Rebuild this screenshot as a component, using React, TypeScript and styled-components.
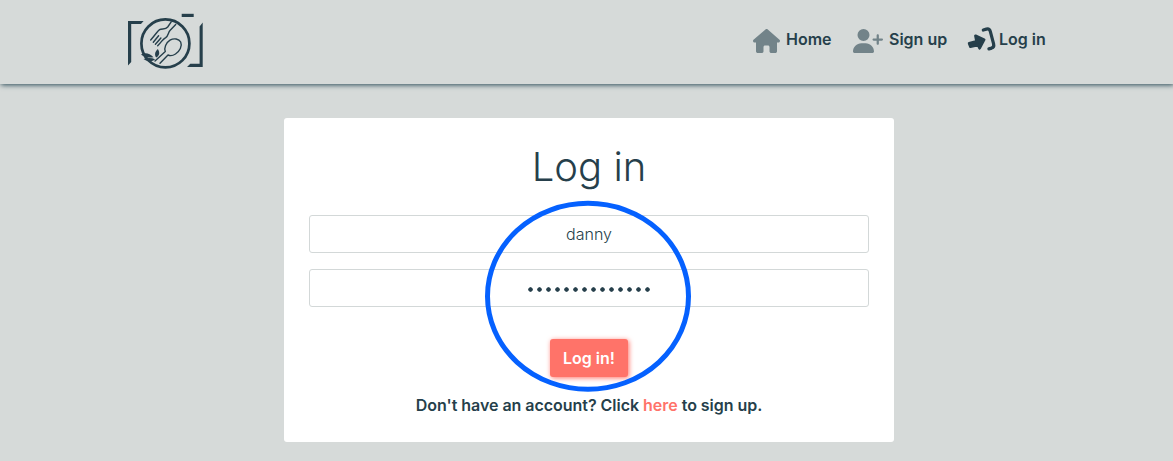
import React from 'react';
import styled, { createGlobalStyle } from 'styled-components';
import { FaHouse, FaUserPlus } from 'react-icons/fa6';

const ink = '#263f4b';
const coral = '#ff7369';

const GlobalStyle = createGlobalStyle`
  *, *::before, *::after { box-sizing: border-box; }
  body {
    margin: 0;
    background: #d6dad9;
    color: ${ink};
    font-family: Inter, "Liberation Sans", sans-serif;
    font-size: 16px;
    line-height: 24px;
    overflow: hidden;
  }
`;

const Header = styled.header`
  display: flex;
  justify-content: space-between;
  height: 84px;
  padding: 10px 127px 0 125px;
  background: #d6dad9;
  box-shadow: 1px 1px 5px #2b4b57;
`;

const Logo = styled.svg`
  display: block;
  width: 80px;
  height: 60px;
`;

const Nav = styled.nav`
  display: flex;
  height: 60px;
  padding-top: 17px;
`;

const NavLink = styled.a<{ $width: number; $icon: number; $active?: boolean }>`
  display: flex;
  width: ${(p) => p.$width}px;
  color: ${ink};
  font-weight: 600;
  white-space: nowrap;
  text-decoration: none;

  svg {
    flex: none;
    height: ${(p) => (p.$active ? 26 : 24)}px;
    width: ${(p) => p.$icon}px;
    margin: ${(p) => (p.$active ? '-1px 2px 0 -3px' : '2px 6px 0 0')};
    color: ${(p) => (p.$active ? ink : '#728389')};
  }
`;

const Card = styled.main`
  position: relative;
  width: 610px;
  height: 324px;
  margin: 34px 0 0 284px;
  padding: 24px 25px;
  border-radius: 3px;
  background: #fff;
  text-align: center;
`;

const Title = styled.h1`
  margin: 0 0 24px;
  font-size: 40px;
  font-weight: 300;
  line-height: 49px;
`;

const Form = styled.form`
  display: flex;
  flex-direction: column;
  align-items: center;
`;

const Field = styled.div`
  display: flex;
  align-items: center;
  justify-content: center;
  width: 100%;
  height: 38px;
  margin-bottom: 16px;
  border: 1px solid #d3d8d8;
  border-radius: 3px;
  font-weight: 300;
`;

const Mask = styled.span`
  display: flex;
  gap: 4px;
  padding: 3px 1px 0 0;
`;

const Dot = styled.i`
  width: 5px;
  height: 5px;
  border-radius: 50%;
  background: radial-gradient(circle, ${ink} 1.9px, transparent 2.8px);
`;

const Submit = styled.button`
  width: 78px;
  height: 38px;
  margin: 16px 0 0;
  padding: 0;
  border: 0;
  border-radius: 3px;
  background: ${coral};
  box-shadow: 1px 1px 5px ${coral};
  color: #fff;
  font: 600 16px/24px Inter, sans-serif;
`;

const Prompt = styled.p`
  margin: 16px 0 0;
  font-weight: 600;
  letter-spacing: -0.03px;
`;

const PromptLink = styled.a`
  color: ${coral};
`;

const Highlight = styled.svg`
  position: absolute;
  left: 200px;
  top: 82px;
  width: 208px;
  height: 193px;
  pointer-events: none;
`;

function CameraLogo() {
  return (
    <Logo viewBox="125 10 80 60" fill="none" stroke={ink}>
      <g fill={ink} stroke="none">
        <path d="M128 21H143.6L141 24H131.2V62L128 65.5Z" />
        <path d="M181.7 13.8H193.7V17H181.7Z" />
        <path d="M202.7 22.5V67H187L190.3 63.8H199.6V26.5Z" />
        <path d="M141 54.5C145 52.3 149.5 53 153.5 57.2C149 58 145 57.6 141 54.5Z" />
        <path d="M143.5 58.9C148 57.6 152 57.7 155 59.2C152 62.2 147.5 61.8 143.5 58.9Z" />
        <path d="M157.8 49C160 52.2 159.8 55.5 156.2 57.6C154 54.6 155.2 51.5 157.8 49Z" />
      </g>
      <circle cx="165.4" cy="43.4" r="24" strokeWidth="2.7" />
      <g strokeWidth="1.4" strokeLinecap="round" strokeLinejoin="round">
        <path d="M171.2 21.8L167.7 27C165.5 30 162 28.2 159.6 29.6C157.8 30.8 156.8 33 150.7 40" />
        <path d="M175.7 24.5L170.2 30.2C167.8 32.8 168.7 35.3 165.7 37.6C162.5 39.3 162 41.5 157.7 45.7" />
        <path d="M158.6 35.8L153.3 42.2M160.9 38L155.4 44.3" />
        <path d="M155 61L165.3 51.6C163.8 47.8 166 42.8 170 40.2C174 37.8 179 38.7 180.7 42C182.5 46 179.7 51.3 175.5 54C172.8 55.8 170 56 168 55L160 63.3" />
      </g>
    </Logo>
  );
}

function LoginIcon() {
  return (
    <svg viewBox="967 26 30 26" fill="none" stroke="currentColor" strokeLinecap="round" strokeLinejoin="round">
      <path d="M983.3 30L986.4 29.1Q989.4 28.4 990.3 31.4L993.6 43.8Q994.4 47.1 991.6 48.1L988.9 48.9" strokeWidth="3.2" />
      <path d="M969.2 43.4L976.6 41.4L975.5 35.8L984.1 39.7L979.6 48.2L978.1 45L970.5 46.6Z" fill="currentColor" strokeWidth="2.8" />
    </svg>
  );
}

export default function App() {
  return (
    <>
      <GlobalStyle />
      <Header>
        <CameraLogo />
        <Nav>
          <NavLink $width={100} $icon={27}><FaHouse />Home</NavLink>
          <NavLink $width={117} $icon={30}><FaUserPlus />Sign up</NavLink>
          <NavLink $width={76} $icon={30} $active><LoginIcon />Log in</NavLink>
        </Nav>
      </Header>
      <Card>
        <Title>Log in</Title>
        <Form>
          <Field>danny</Field>
          <Field>
            <Mask>
              {Array.from({ length: 14 }, (_, i) => <Dot key={i} />)}
            </Mask>
          </Field>
          <Submit type="button">Log in!</Submit>
        </Form>
        <Prompt>Don't have an account? Click <PromptLink>here</PromptLink> to sign up.</Prompt>
        <Highlight viewBox="0 0 208 193">
          <ellipse cx="104" cy="96.3" rx="100.5" ry="93" fill="none" stroke="#0561ff" strokeWidth="5" />
        </Highlight>
      </Card>
    </>
  );
}
